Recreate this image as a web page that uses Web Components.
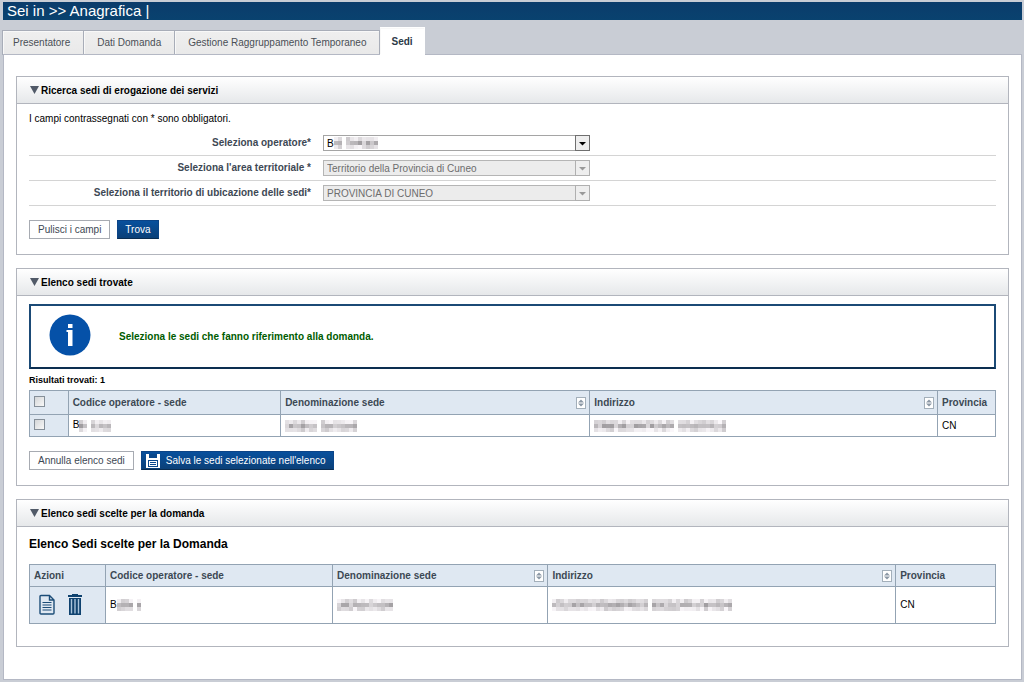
<!DOCTYPE html>
<html lang="it">
<head>
<meta charset="utf-8">
<title>Anagrafica - Sedi</title>
<style>
  html { background: #c9cdd5; }
  body { margin: 0; font-family: "Liberation Sans", Arial, sans-serif; font-size: 10px; color: #000; }
</style>
</head>
<body>
<sede-page></sede-page>

<template id="t-page">
  <style>
    :host { display: flex; flex-direction: column; min-height: 100vh; box-sizing: border-box; padding: 2px 2px 2px 3px; }
    header { background: linear-gradient(#0b3c6b, #09426f); color: #fff; font-size: 15px; line-height: 18px; padding: 0 4px; }
    nav { display: flex; align-items: flex-end; padding-top: 7px; height: 28px; margin-left: -1px; }
    main { flex: 1; background: #fff; border: 1px solid #b4b8c4; padding: 21px 12px 24px; display: flex; flex-direction: column; gap: 13px; margin-top: -1px; }
    p, h3 { margin: 0; }
    .note { line-height: 12px; padding: 9px 0 6px; }
    .buttons { display: flex; gap: 7px; padding: 14px 0 15px; }
    .info { display: flex; align-items: center; border: 2px solid #1b4a76; border-bottom-color: #0c2e50; height: 61px; margin-top: 8px; color: #005c00; font-weight: bold; }
    .info svg { width: 42px; height: 42px; margin: 0 28px 4px 18px; }
    .count { font-weight: bold; font-size: 9px; line-height: 12px; padding: 5px 0 4px; }
    h3 { font-size: 12px; line-height: 16px; padding: 9px 0 12px; }
    .last { padding-bottom: 22px; }
    .act { display: flex; gap: 12px; padding-left: 5px; }
    .act button { all: unset; display: block; height: 22px; cursor: pointer; }
    .act button:focus-visible { outline: 1px solid #1c4d78; }
    .act svg { display: block; width: 16px; height: 22px; }
    table { width: 100%; border-collapse: collapse; table-layout: fixed; line-height: 12px; }
    th, td { border: 1px solid #93a3b3; padding: 0 4px; text-align: left; }
    th { background: #dfe8f2; color: #3c4854; height: 23px; }
    .pick { background: #dfe8f2; }
    td { height: 21px; }
    .tall th { height: 21px; }
    .tall td { height: 36px; }
    .th { display: flex; justify-content: space-between; align-items: center; margin-right: -1px; }
    input { appearance: none; display: block; width: 11px; height: 11px; margin: 0 0 2px; border: 1px solid #858f99; background: linear-gradient(135deg, #d4d6d8, #f8f8f8); }
  </style>
  <header>Sei in &gt;&gt; Anagrafica |</header>
  <nav aria-label="Sezioni">
    <nav-tab>Presentatore</nav-tab><nav-tab>Dati Domanda</nav-tab><nav-tab>Gestione Raggruppamento Temporaneo</nav-tab><nav-tab active>Sedi</nav-tab>
  </nav>
  <main>
    <fold-panel heading="Ricerca sedi di erogazione dei servizi">
      <p class="note">I campi contrassegnati con * sono obbligatori.</p>
      <select-row label="Seleziona operatore*" value="B" masked></select-row>
      <select-row label="Seleziona l'area territoriale *" value="Territorio della Provincia di Cuneo" disabled></select-row>
      <select-row label="Seleziona il territorio di ubicazione delle sedi*" value="PROVINCIA DI CUNEO" disabled></select-row>
      <div class="buttons"><push-button>Pulisci i campi</push-button><push-button primary>Trova</push-button></div>
    </fold-panel>
    <fold-panel heading="Elenco sedi trovate">
      <div class="info">
        <svg viewBox="0 0 42 42" aria-hidden="true"><circle cx="21" cy="21" r="20.5" fill="#0551a8"/><path d="M19 10h4.500v4H19zM17.500 16h6v16H19V18h-1.500z" fill="#fff"/></svg>
        <p>Seleziona le sedi che fanno riferimento alla domanda.</p>
      </div>
      <p class="count">Risultati trovati: 1</p>
      <table>
        <colgroup><col style="width:4%"><col style="width:22%"><col style="width:32%"><col style="width:36%"><col style="width:6%"></colgroup>
        <thead><tr><th><input type="checkbox" aria-label="Seleziona tutte"></th><th>Codice operatore - sede</th><th><div class="th">Denominazione sede<sort-icon></sort-icon></div></th><th><div class="th">Indirizzo<sort-icon></sort-icon></div></th><th>Provincia</th></tr></thead>
        <tbody><tr><td class="pick"><input type="checkbox" aria-label="Seleziona sede"></td><td>B<pixel-mask cols="2,0,1,1,3" seed="3"></pixel-mask></td><td><pixel-mask cols="8,0,9" seed="5"></pixel-mask></td><td><pixel-mask cols="20,0,12" seed="8"></pixel-mask></td><td>CN</td></tr></tbody>
      </table>
      <div class="buttons"><push-button>Annulla elenco sedi</push-button><push-button primary icon>Salva le sedi selezionate nell'elenco</push-button></div>
    </fold-panel>
    <fold-panel heading="Elenco sedi scelte per la domanda">
      <h3>Elenco Sedi scelte per la Domanda</h3>
      <div class="last"><table class="tall">
        <colgroup><col style="width:76px"><col style="width:23.5%"><col style="width:22.3%"><col style="width:36%"><col></colgroup>
        <thead><tr><th>Azioni</th><th>Codice operatore - sede</th><th><div class="th">Denominazione sede<sort-icon></sort-icon></div></th><th><div class="th">Indirizzo<sort-icon></sort-icon></div></th><th>Provincia</th></tr></thead>
        <tbody><tr><td class="pick"><div class="act">
          <button aria-label="Dettaglio"><svg viewBox="0 0 16 22" fill="none" stroke="#1c4d78" stroke-width="1.4"><path d="M2 1.500h8.500l4.500 4.500v13q0 1-1 1h-12q-1 0-1-1v-16.500q0-1 1-1zM10.500 1.500v4.500h4.500"/><path d="M3.500 8.500h9M3.500 11h9M3.500 13.500h9M3.500 16h9" stroke-width="1"/></svg></button>
          <button aria-label="Elimina"><svg viewBox="0 0 16 22"><path d="M5 0h6v1h4v2H1V1h4zM2 4h12v17H2z" fill="#0f426f"/><path d="M4.500 5v14.500M8 5v14.500M11.500 5v14.500" stroke="#a9c4dc" stroke-width="1.400"/></svg></button>
        </div></td><td>B<pixel-mask cols="4,0,1" seed="2"></pixel-mask></td><td><pixel-mask cols="14" seed="9"></pixel-mask></td><td><pixel-mask cols="24,0,20" seed="4"></pixel-mask></td><td>CN</td></tr></tbody>
      </table></div>
    </fold-panel>
  </main>
</template>

<template id="t-tab">
  <style>
    :host { display: block; }
    a { display: block; box-sizing: border-box; height: 25px; line-height: 24px; padding: 0 13px; color: #4a4f56; text-decoration: none; background: linear-gradient(#efefef, #e9e9e9); border: 1px solid #a8adb8; border-left-width: 0; box-shadow: inset 1px 1px #f8f8f8; }
    :host(:first-child) a { border-left-width: 1px; padding-left: 10px; }
    :host([active]) a { height: 28px; line-height: 28px; padding: 0 11px; background: #fff; border-color: #fff; color: #2c3a48; font-weight: bold; position: relative; }
  </style>
  <a href="#"><slot></slot></a>
</template>

<template id="t-panel">
  <style>
    :host { display: block; border: 1px solid #b2b5bd; background: #fff; }
    h2 { margin: 0; display: flex; align-items: center; gap: 2px; height: 26px; padding-left: 13px; font-size: 10px; background: linear-gradient(#fff, #e6e8ea); border-bottom: 1px solid #b2b5bd; }
    svg { width: 9px; height: 8px; }
    .body { padding: 0 12px; }
  </style>
  <h2><svg viewBox="0 0 9 8" aria-hidden="true"><path d="M0 0h9L4.500 8z" fill="#515a68"/></svg><span></span></h2>
  <div class="body"><slot></slot></div>
</template>

<template id="t-row">
  <style>
    :host { display: grid; grid-template-columns: 282px 267px; gap: 12px; align-items: center; height: 24px; border-bottom: 1px solid #d4d4d4; }
    label { text-align: right; font-weight: bold; color: #3d4854; padding-bottom: 2px; }
    .box { display: grid; align-items: center; }
    .box > * { grid-area: 1 / 1; }
    select { appearance: none; box-sizing: border-box; width: 100%; height: 16px; padding: 0 3px; border: 1px solid #a5a5a5; border-radius: 0; background: #fff; font: inherit; color: #000; opacity: 1; }
    select:disabled { background: #ececec; color: #6d6d6d; border-color: #b5b5b5; }
    svg { justify-self: end; width: 15px; height: 16px; pointer-events: none; }
    rect { fill: #eee; stroke: #6f6f6f; } path { fill: #000; }
    :host([disabled]) rect { stroke: #b0b0b0; } :host([disabled]) path { fill: #999; }
    pixel-mask { margin-left: 11px; pointer-events: none; }
  </style>
  <label for="s"></label>
  <div class="box"><select id="s"><option></option></select><svg viewBox="0 0 15 16" aria-hidden="true"><rect x=".5" y=".5" width="14" height="15"/><path d="M4 7h7L7.500 10.500z"/></svg></div>
</template>

<template id="t-button">
  <style>
    :host { display: block; }
    button { display: flex; align-items: center; gap: 6px; box-sizing: border-box; height: 19px; padding: 0 8px; border: 1px solid #a7abb2; background: #fff; color: #3d4854; font: inherit; }
    :host([primary]) button { padding: 0 7px; border-color: #0b4487; border-bottom-color: #0a2c50; background: linear-gradient(#08509d, #0b4078); color: #fff; }
    svg { width: 14px; height: 14px; margin-left: -3px; }
  </style>
  <button type="button"><slot></slot></button>
</template>

<script>
  const stamp = (host, id) => {
    const root = host.attachShadow({ mode: "open" });
    root.append(document.getElementById(id).content.cloneNode(true));
    return root;
  };

  // Grey mosaic that hides private data; cols lists run lengths, 0 is a gap.
  customElements.define("pixel-mask", class extends HTMLElement {
    connectedCallback() {
      if (this.shadowRoot) return;
      let seed = +this.getAttribute("seed") * 7919, cells = "", x = 0;
      for (const run of this.getAttribute("cols").split(",").map(Number)) {
        for (let i = 0; i < run; i++, x += 4) for (let row = 0; row < 3; row++) {
          seed = (seed * 1103 + 12345) % 65521;
          const g = row === 1 ? 160 + seed % 60 : 205 + seed % 46;
          cells += `<rect x="${x}" y="${row * 4}" width="4" height="4" fill="rgb(${g},${g - 3},${g})"/>`;
        }
        if (!run) x += 4;
      }
      this.attachShadow({ mode: "open" }).innerHTML =
        `<style>:host{display:inline-block;vertical-align:middle}svg{display:block}</style><svg width="${x}" height="12" aria-hidden="true">${cells}</svg>`;
    }
  });
  customElements.define("sort-icon", class extends HTMLElement {
    connectedCallback() {
      if (this.shadowRoot) return;
      this.attachShadow({ mode: "open" }).innerHTML =
        `<style>:host{display:block}svg{display:block;width:10px;height:12px}</style><svg viewBox="0 0 10 12" aria-hidden="true"><rect x=".5" y=".5" width="9" height="11" fill="#fff" stroke="#a3afba"/><path d="M2 5.500L5 2.500l3 3zM2 6.500h6L5 9.500z" fill="#8b98a5"/></svg>`;
    }
  });
  customElements.define("nav-tab", class extends HTMLElement {
    constructor() { super(); stamp(this, "t-tab"); }
  });
  customElements.define("fold-panel", class extends HTMLElement {
    connectedCallback() {
      if (!this.shadowRoot) stamp(this, "t-panel").querySelector("span").textContent = this.getAttribute("heading");
    }
  });
  customElements.define("push-button", class extends HTMLElement {
    connectedCallback() {
      if (this.shadowRoot) return;
      const root = stamp(this, "t-button");
      if (this.hasAttribute("icon")) root.querySelector("button").insertAdjacentHTML("afterbegin",
        `<svg viewBox="0 0 14 14" aria-hidden="true"><path d="M0 0h14v14H0z" fill="#fff"/><path d="M3 0h8v4H3zM2 6h10v7H2z" fill="#0a488c"/><path d="M3 7h8v5H3z" fill="#fff"/><path d="M4 8.500h6M4 10.500h6" stroke="#0a488c"/></svg>`);
    }
  });
  customElements.define("select-row", class extends HTMLElement {
    connectedCallback() {
      if (this.shadowRoot) return;
      const root = stamp(this, "t-row");
      root.querySelector("label").textContent = this.getAttribute("label");
      root.querySelector("option").textContent = this.getAttribute("value");
      root.querySelector("select").disabled = this.hasAttribute("disabled");
      if (this.hasAttribute("masked")) {
        const mask = document.createElement("pixel-mask");
        mask.setAttribute("cols", "2,0,8");
        mask.setAttribute("seed", "6");
        root.querySelector(".box").append(mask);
      }
    }
  });
  customElements.define("sede-page", class extends HTMLElement {
    constructor() { super(); stamp(this, "t-page"); }
  });
</script>
</body>
</html>
